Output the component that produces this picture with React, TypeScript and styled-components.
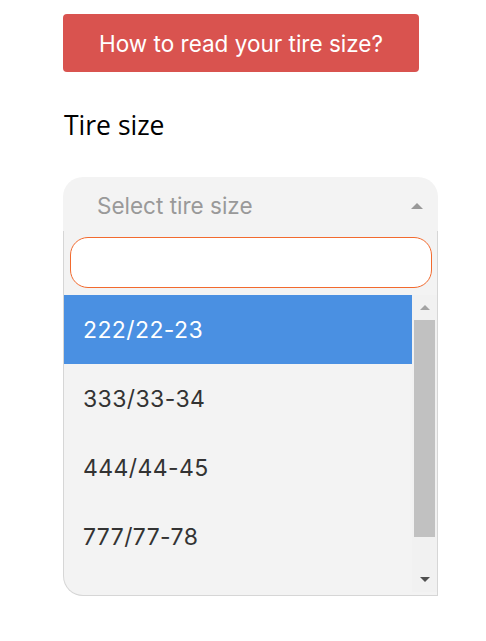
import React from 'react'
import styled, { createGlobalStyle } from 'styled-components'

const sizes = ['222/22-23', '333/33-34', '444/44-45', '777/77-78']

const GlobalStyle = createGlobalStyle`
  body {
    margin: 0;
    background: #ffffff;
    font-family: Inter, 'Noto Sans', sans-serif;
  }
`

const Page = styled.div`
  padding: 14px 0 0 63px;
  width: 375px;
`

const HelpButton = styled.button`
  display: block;
  width: 356px;
  height: 58px;
  border: none;
  border-radius: 4px;
  background: #d9534f;
  color: #ffffff;
  font-family: Inter, sans-serif;
  font-size: 22.5px;
  cursor: pointer;
`

const Label = styled.div`
  margin-top: 37px;
  padding-left: 1px;
  font-family: 'Open Sans', 'Noto Sans', sans-serif;
  font-size: 26.5px;
  line-height: 32px;
  color: #000000;
`

const Select = styled.div`
  margin-top: 36px;
  width: 375px;
`

const Header = styled.div`
  height: 54px;
  display: flex;
  align-items: center;
  justify-content: space-between;
  padding: 3px 15px 0 34px;
  box-sizing: border-box;
  background: #f3f3f3;
  border-radius: 20px 20px 0 0;
  color: #999999;
  font-size: 22.5px;
`

// css triangle, half-width and height given separately
const Caret = styled.span<{ $color: string; $up: boolean; $w: number; $h: number }>`
  width: 0;
  height: 0;
  border-left: ${(p) => p.$w}px solid transparent;
  border-right: ${(p) => p.$w}px solid transparent;
  ${(p) => (p.$up ? 'border-bottom' : 'border-top')}: ${(p) => p.$h}px solid
    ${(p) => p.$color};
`

const Dropdown = styled.div`
  background: #f3f3f3;
  border: 1px solid #d6d6d6;
  border-top: none;
  border-radius: 0 0 0 20px;
  overflow: hidden;
`

const SearchWrap = styled.div`
  padding: 6px 5px 7px 6px;
`

const Search = styled.input`
  display: block;
  width: 100%;
  height: 51px;
  box-sizing: border-box;
  border: 1px solid #f26a2e;
  border-radius: 18px;
  background: #ffffff;
  outline: none;
  font-size: 20px;
  padding: 0 16px;
`

const ListArea = styled.div`
  display: flex;
  height: 300px;
`

const Options = styled.ul`
  flex: 1;
  margin: 0;
  padding: 0;
  list-style: none;
  overflow: hidden;
`

const Option = styled.li<{ $active?: boolean }>`
  height: 69px;
  display: flex;
  align-items: center;
  padding-left: 19px;
  font-size: 23px;
  letter-spacing: 0.4px;
  color: ${(p) => (p.$active ? '#ffffff' : '#333333')};
  background: ${(p) => (p.$active ? '#4a90e2' : 'transparent')};
`

const Scrollbar = styled.div`
  width: 25px;
  height: 297px;
  background: #f1f1f1;
  display: flex;
  flex-direction: column;
  align-items: center;
`

const ScrollButton = styled.div`
  height: 25px;
  display: flex;
  align-items: center;
  justify-content: center;
`

const Track = styled.div`
  flex: 1;
  width: 100%;
  padding: 0 2px;
  box-sizing: border-box;
`

const Thumb = styled.div`
  height: 217px;
  background: #c1c1c1;
`

export default function App() {
  return (
    <>
      <GlobalStyle />
      <Page>
        <HelpButton>How to read your tire size?</HelpButton>
        <Label>Tire size</Label>
        <Select>
          <Header>
            <span>Select tire size</span>
            <Caret $color="#999999" $up $w={6.5} $h={6} />
          </Header>
          <Dropdown>
            <SearchWrap>
              <Search />
            </SearchWrap>
            <ListArea>
              <Options>
                {sizes.map((s, i) => (
                  <Option key={s} $active={i === 0}>
                    {s}
                  </Option>
                ))}
              </Options>
              <Scrollbar>
                <ScrollButton>
                  <Caret $color="#a3a3a3" $up $w={5.5} $h={5.5} />
                </ScrollButton>
                <Track>
                  <Thumb />
                </Track>
                <ScrollButton>
                  <Caret $color="#505050" $up={false} $w={5.5} $h={5.5} />
                </ScrollButton>
              </Scrollbar>
            </ListArea>
          </Dropdown>
        </Select>
      </Page>
    </>
  )
}
